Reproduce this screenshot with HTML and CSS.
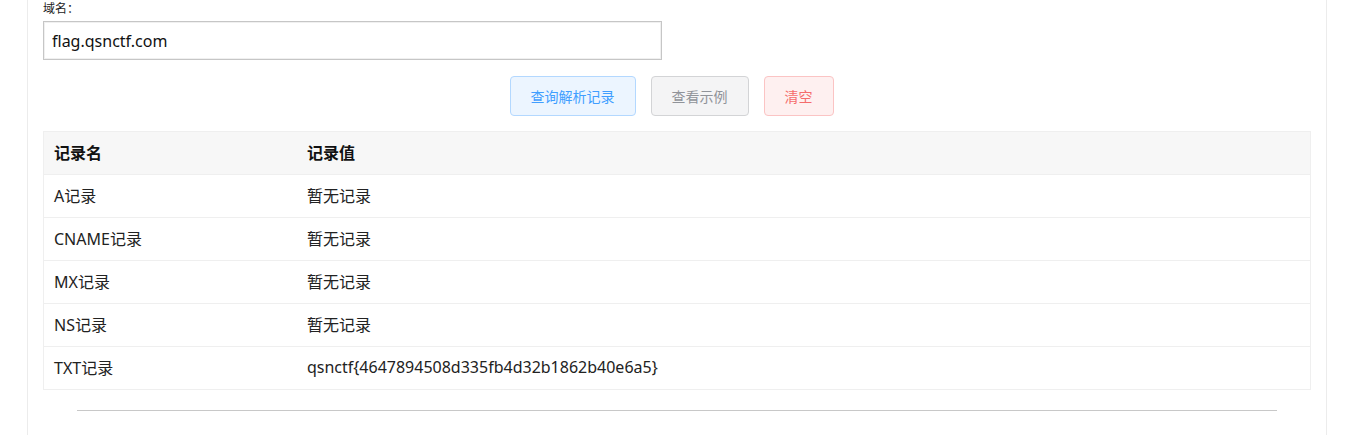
FILE: index.html
```html
<!DOCTYPE html>
<html lang="zh-CN">
<head>
<meta charset="utf-8">
<title>DNS 查询</title>
<link rel="stylesheet" href="styles.css">
</head>
<body>
<div class="page">
  <div class="field">
    <label class="field-label" for="domain">域名：</label>
    <input id="domain" class="field-input" type="text" value="flag.qsnctf.com">
  </div>
  <div class="actions">
    <button class="btn btn-primary">查询解析记录</button>
    <button class="btn btn-info">查看示例</button>
    <button class="btn btn-danger">清空</button>
  </div>
  <table class="records">
    <thead>
      <tr><th class="col-name">记录名</th><th>记录值</th></tr>
    </thead>
    <tbody>
      <tr><td>A记录</td><td>暂无记录</td></tr>
      <tr><td>CNAME记录</td><td>暂无记录</td></tr>
      <tr><td>MX记录</td><td>暂无记录</td></tr>
      <tr><td>NS记录</td><td>暂无记录</td></tr>
      <tr><td>TXT记录</td><td>qsnctf{4647894508d335fb4d32b1862b40e6a5}</td></tr>
    </tbody>
  </table>
  <hr class="divider">
</div>
</body>
</html>
```
FILE: styles.css
```css
html, body {
  margin: 0;
  padding: 0;
  background: #ffffff;
}
body {
  font-family: "Noto Sans", "Noto Sans CJK SC", sans-serif;
  color: #222;
}
.page {
  box-sizing: border-box;
  width: 1300px;
  min-height: 100vh;
  margin-left: 27px;
  padding: 0 15px;
  border-left: 1px solid #ececec;
  border-right: 1px solid #ececec;
}
.field {
  display: flex;
  flex-direction: column;
  align-items: flex-start;
}
.field-label {
  font-size: 12px;
  line-height: 18px;
  color: #222;
}
.field-input {
  box-sizing: border-box;
  width: 619px;
  height: 39px;
  margin-top: 3px;
  padding: 0 8px;
  border: 1px solid #c6c6c6;
  box-shadow: inset 0 0 0 1px #f0f0f0;
  font-family: "Noto Sans", "Noto Sans CJK SC", sans-serif;
  font-size: 16px;
  color: #111;
  outline: none;
}
.actions {
  display: flex;
  justify-content: center;
  gap: 15px;
  margin-top: 16px;
  padding-right: 11px;
}
.btn {
  box-sizing: border-box;
  height: 40px;
  padding: 0 20px;
  border: 1px solid;
  border-radius: 4px;
  font-family: "Noto Sans CJK SC", sans-serif;
  font-size: 14px;
  line-height: 1;
  cursor: pointer;
}
.btn-primary {
  background: #ecf5ff;
  border-color: #b3d8ff;
  color: #409eff;
}
.btn-info {
  background: #f4f4f5;
  border-color: #d3d4d6;
  color: #909399;
}
.btn-danger {
  background: #fef0f0;
  border-color: #fbc4c4;
  color: #f56c6c;
}
.records {
  width: 100%;
  margin-top: 15px;
  border-collapse: collapse;
  font-size: 16px;
}
.records th,
.records td {
  height: 43px;
  box-sizing: border-box;
  padding: 0 10px 3px;
  border: 1px solid #efefef;
  border-left: none;
  border-right: none;
  text-align: left;
  vertical-align: middle;
}
.records tr > :first-child { border-left: 1px solid #efefef; }
.records tr > :last-child { border-right: 1px solid #efefef; }
.records th {
  background: #f7f7f7;
  font-weight: bold;
  color: #111;
}
.records .col-name {
  width: 20%;
}
.divider {
  margin: 20px 34px 0;
  border: none;
  border-top: 1px solid #c8c8c8;
  height: 0;
}
```
